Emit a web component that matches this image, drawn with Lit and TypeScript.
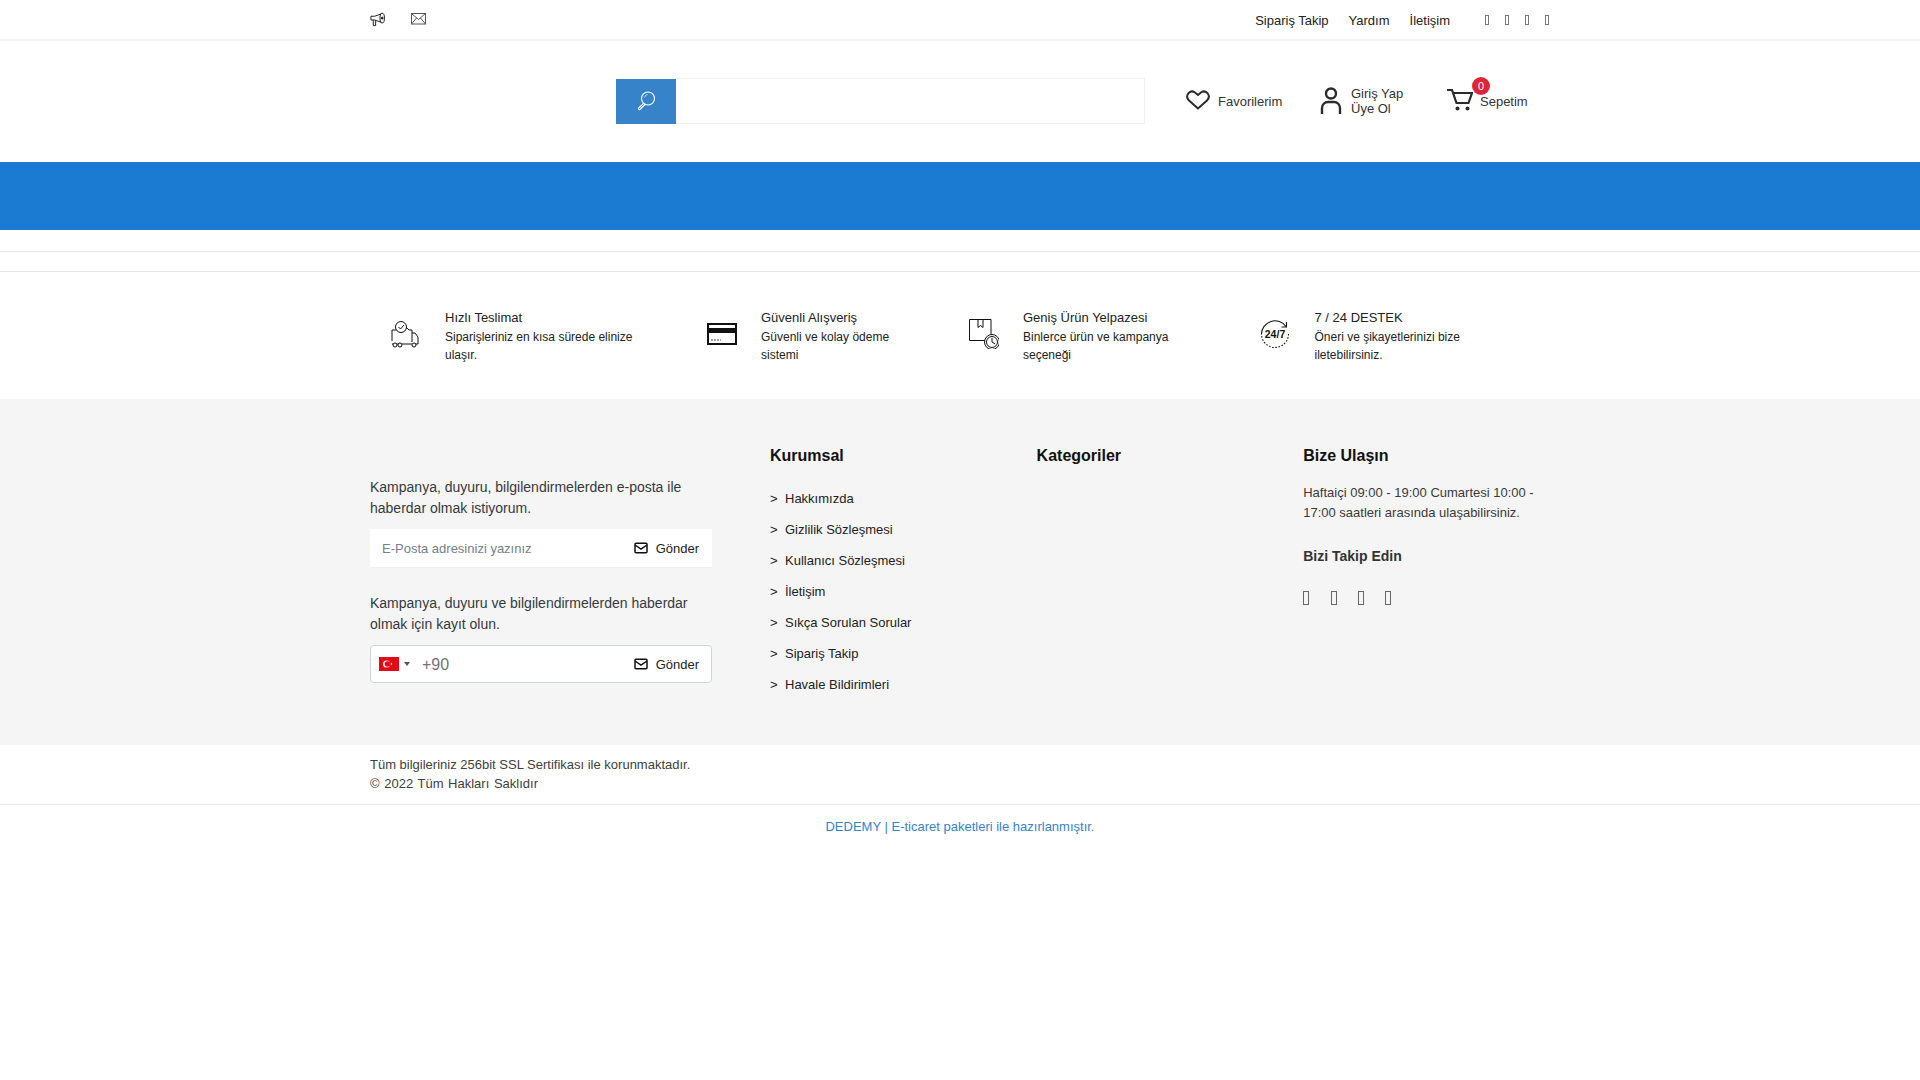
import { LitElement, html, css, svg } from "lit";
import { customElement } from "lit/decorators.js";

const mail = html`<svg class="mailicon" width="14" height="12" viewBox="0 0 14 12" fill="none" stroke="#111" stroke-width="1.5"><rect x="1" y="1.2" width="12" height="9.6" rx="1"/><path d="M1 3l6 4 6-4"/></svg>`;

const tofu = (cls: string) => html`<span class=${cls}></span>`;

const features = [
  { w: 316, pad: 20, gap: 25, title: "Hızlı Teslimat", text: "Siparişleriniz en kısa sürede elinize ulaşır.", textW: 200,
    icon: svg`<g fill="none" stroke="#111" stroke-width="1"><path d="M2 22V11h4l3-3h7l3 3h3v12"/><circle cx="11" cy="8" r="5.500" fill="#fff"/><path d="M8.500 8l2 2L14 6"/><path d="M22 14h3l3 4v7h-3M2 25h20"/><circle cx="5" cy="26" r="2" fill="#fff"/><circle cx="10" cy="26" r="2" fill="#fff"/><circle cx="24" cy="26" r="2" fill="#fff"/></g>` },
  { w: 262, pad: 21, gap: 24, title: "Güvenli Alışveriş", text: "Güvenli ve kolay ödeme sistemi", textW: 150,
    icon: svg`<rect x="1" y="5" width="28" height="20" fill="#fff" stroke="#111" stroke-width="2"/><rect x="1" y="9" width="28" height="5" fill="#111"/><path d="M4 21h10" stroke="#888" stroke-width="1.4" stroke-dasharray="2 1"/>` },
  { w: 292, pad: 21, gap: 24, title: "Geniş Ürün Yelpazesi", text: "Binlerce ürün ve kampanya seçeneği", textW: 170,
    icon: svg`<g fill="none" stroke="#111" stroke-width="1"><path d="M22 17V0.500H0.500V21.500H17"/><path d="M9 0.500v8l2.500-2 2.500 2v-8"/><circle cx="23" cy="23" r="7.500" fill="#fff"/><circle cx="23" cy="23" r="5.500"/><path d="M23 19v4l3 2"/></g>` },
  { w: 300, pad: 20, gap: 24.5, title: "7 / 24 DESTEK", text: "Öneri ve şikayetlerinizi bize iletebilirsiniz.", textW: 170,
    icon: svg`<g fill="none" stroke="#111" stroke-width="1.100"><path d="M1.500 15A13.500 13.500 0 0 1 26 7.500"/><path d="M26.500 3V8H21.500"/><path d="M28.500 15A13.500 13.500 0 0 1 1.500 15" stroke-dasharray="1.600 1.600"/></g><text x="15" y="18.800" text-anchor="middle" font-family="Liberation Sans, sans-serif" font-size="10.500" font-weight="700" fill="#111">24/7</text>` },
];

const links = ["Hakkımızda", "Gizlilik Sözleşmesi", "Kullanıcı Sözleşmesi", "İletişim", "Sıkça Sorulan Sorular", "Sipariş Takip", "Havale Bildirimleri"];

@customElement("app-root")
export class AppRoot extends LitElement {
  static styles = css`
    :host { display: block; font-family: "Liberation Sans", Arial, sans-serif; color: #212529; font-size: 13px; background: #fff; min-height: 1080px; }
    * { box-sizing: border-box; }
    .wrap { width: 1200px; margin: 0 auto; }
    .topbar { height: 41px; border-bottom: 2px solid #f2f2f2; }
    .topbar .wrap { height: 39px; display: flex; align-items: center; justify-content: space-between; padding-left: 10px; padding-right: 10px; }
    .topl { display: flex; align-items: center; gap: 26px; margin-top: -1px; }
    .topr { display: flex; align-items: center; font-size: 13px; color: #222; height: 39px; padding-top: 2px; }
    .topr a { margin-right: 20px; }
    .topr a:nth-child(3) { margin-right: 35px; }
    .tofus { display: flex; gap: 16px; margin-right: 1px; margin-top: -1px; }
    .tf { display: block; width: 4px; height: 10px; border: 1px solid #777; }
    .tfl { display: block; width: 6px; height: 14px; border: 1px solid #666; }
    .head { height: 121px; }
    .head .wrap { height: 121px; display: flex; align-items: center; }
    .search { display: flex; width: 529px; height: 46px; margin-left: 256px; }
    .sbtn { width: 60px; height: 45px; background: #3783c9; display: flex; align-items: center; justify-content: center; }
    .sinput { flex: 1; border: 1px solid #f0f0f0; border-left: none; height: 46px; margin-top: -1px; }
    .acts { display: flex; align-items: center; color: #333; font-size: 13px; }
    .fav { display: flex; align-items: center; gap: 8px; margin-left: 41px; width: 134px; }
    .fav svg { margin-bottom: 4px; }
    .acc { display: flex; align-items: center; gap: 9px; width: 127px; line-height: 15px; }
    .acc svg { margin-bottom: 3px; }
    .acc span { margin-top: -2px; }
    .cart { display: flex; align-items: center; gap: 7px; position: relative; }
    .cart svg { margin-bottom: 3px; }
    .badge { position: absolute; left: 25px; top: -12px; width: 18px; height: 18px; border-radius: 50%; background: #dc2536; color: #fff; font-size: 11px; display: flex; align-items: center; justify-content: center; }
    .blue { height: 68px; background: #1b7ad2; }
    .strip { height: 21px; }
    .thin { height: 21px; border-top: 1px solid #e6e6e6; border-bottom: 1px solid #e6e6e6; }
    .feats { height: 127px; }
    .feats .wrap { display: flex; padding-top: 38px; }
    .feat { display: flex; align-items: flex-start; font-size: 12px; line-height: 18px; color: #222; }
    .feat svg { flex: none; margin-top: 9px; }
    .ft { font-size: 13px; line-height: 18px; margin-bottom: 1px; margin-top: -1px; }
    .foot { background: #f5f5f5; height: 346px; }
    .foot .wrap { display: flex; padding-left: 10px; padding-top: 47px; }
    .c1 { width: 342px; margin-right: 58px; padding-top: 31px; font-size: 14px; line-height: 21px; color: #343a40; }
    .c1 p { margin: 0; }
    .mailform { margin-top: 10px; height: 39px; background: #fff; border-bottom: 1px solid #eee; display: flex; align-items: center; justify-content: space-between; padding: 0 13px 0 12px; color: #75808a; font-size: 13px; margin-bottom: 25px; }
    .send { display: flex; align-items: center; gap: 8px; color: #222; font-size: 13px; }
    .phone { margin-top: 10px; height: 38px; background: #fff; border: 1px solid #ced4da; border-radius: 4px; display: flex; align-items: center; padding: 0 12px 0 8px; color: #6c757d; font-size: 16px; }
    .flag { display: block; margin-right: 5px; flex: none; }
    .caret { width: 0; height: 0; border-left: 3px solid transparent; border-right: 3px solid transparent; border-top: 4px solid #555; margin-right: 12px; }
    .phone .send { margin-left: auto; }
    .col { width: 266.6px; }
    .col.last { width: 240px; }
    h4 { margin: 0; font-size: 16px; line-height: 19px; font-weight: 700; color: #111; }
    ul { list-style: none; margin: 18px 0 0; padding: 0; font-size: 13px; color: #222; }
    li { height: 31px; line-height: 31px; display: flex; }
    li span { width: 15px; }
    .hours { margin: 18px 0 0; font-size: 13px; line-height: 19.500px; color: #3a3a3a; }
    .follow { margin-top: 26px; font-size: 14px; line-height: 17px; font-weight: 700; color: #333; }
    .soc { display: flex; gap: 21.330px; margin-top: 26px; }
    .legal { height: 60px; border-bottom: 1px solid #eaeaea; font-size: 13px; line-height: 19px; color: #404040; }
    .legal .wrap { padding: 10px 10px 0; }
    .copy { word-spacing: 1px; }
    .credit { text-align: center; color: #3783c9; font-size: 13px; padding-top: 14px; }
  `;

  render() {
    const flag = html`<svg class="flag" width="20" height="14" viewBox="0 0 20 14"><rect width="20" height="14" fill="#e30a17"/><circle cx="7.500" cy="7" r="3.500" fill="#fff"/><circle cx="8.400" cy="7" r="2.800" fill="#e30a17"/><polygon points="11,7 13.400,6.200 12,8.200 12,5.800 13.400,7.800" fill="#fff"/></svg>`;
    return html`
      <div class="topbar"><div class="wrap">
        <div class="topl">
          <svg width="15" height="15" viewBox="0 0 16 15" fill="none" stroke="#111" stroke-width="1"><ellipse cx="13" cy="6" rx="2.400" ry="5.200"/><path d="M12 1.500L5 4H1v4h4l7 2.500"/><path d="M3.500 8v6h2.500V8.500"/><circle cx="13" cy="6" r="1" fill="#111"/></svg>
          <svg width="15" height="12" viewBox="0 0 15 12" fill="none" stroke="#555" stroke-width="1"><rect x=".5" y=".5" width="14" height="10.500"/><path d="M.5 .5l7 6 7-6M.5 11l5-6M14.500 11l-5-6"/></svg>
        </div>
        <div class="topr">
          <a>Sipariş Takip</a><a>Yardım</a><a>İletişim</a>
          <div class="tofus">${[0, 1, 2, 3].map(() => tofu("tf"))}</div>
        </div>
      </div></div>
      <div class="head"><div class="wrap">
        <div class="search">
          <div class="sbtn"><svg width="20" height="20" viewBox="0 0 20 20" fill="none" stroke="#fff" stroke-width="1.100"><circle cx="12" cy="7.500" r="6.500"/><path d="M8 12l-5.500 5.200a1 1 0 0 0 1.400 1.300L9 13.500"/><path d="M8.500 6.500a4 4 0 0 1 3-3" stroke-width=".7"/></svg></div>
          <div class="sinput"></div>
        </div>
        <div class="acts">
          <div class="fav">
            <svg width="24" height="20" viewBox="0 0 24 20" fill="none" stroke="#2b2b2b" stroke-width="2"><path d="M12 18.500L3 10.500C-1.500 6 3.500-1 9 2.500L12 5l3-2.500C20.500-1 25.500 6 21 10.500Z"/></svg>
            <span>Favorilerim</span>
          </div>
          <div class="acc">
            <svg width="22" height="27" viewBox="0 0 22 27" fill="none" stroke="#2b2b2b" stroke-width="2.400"><circle cx="11" cy="6.500" r="5"/><path d="M2 27v-6a6 6 0 0 1 6-6h6a6 6 0 0 1 6 6v6"/></svg>
            <span>Giriş Yap<br />Üye Ol</span>
          </div>
          <div class="cart">
            <svg width="26" height="22" viewBox="0 0 26 22" fill="none" stroke="#2b2b2b" stroke-width="2.200"><path d="M0 1h5l4.500 13h12L25 4H6"/><circle cx="10.500" cy="19.500" r="2" fill="#2b2b2b" stroke="none"/><circle cx="20.500" cy="19.500" r="2" fill="#2b2b2b" stroke="none"/></svg>
            <span>Sepetim</span>
            <div class="badge">0</div>
          </div>
        </div>
      </div></div>
      <div class="blue"></div>
      <div class="strip"></div>
      <div class="thin"></div>
      <div class="feats"><div class="wrap">
        ${features.map(
          (f) => html`<div class="feat" style="width:${f.w}px;padding-left:${f.pad + 10}px">
            <svg width="30" height="30" viewBox="0 0 30 30" style="margin-right:${f.gap}px">${f.icon}</svg>
            <div style="width:${f.textW}px"><div class="ft">${f.title}</div>${f.text}</div>
          </div>`
        )}
      </div></div>
      <div class="foot"><div class="wrap">
        <div class="c1">
          <p>Kampanya, duyuru, bilgilendirmelerden e-posta ile haberdar olmak istiyorum.</p>
          <div class="mailform"><span>E-Posta adresinizi yazınız</span><span class="send">${mail}Gönder</span></div>
          <p>Kampanya, duyuru ve bilgilendirmelerden haberdar olmak için kayıt olun.</p>
          <div class="phone">${flag}<span class="caret"></span>+90<span class="send">${mail}Gönder</span></div>
        </div>
        <div class="col"><h4>Kurumsal</h4><ul>${links.map((l) => html`<li><span>&gt;</span>${l}</li>`)}</ul></div>
        <div class="col"><h4>Kategoriler</h4></div>
        <div class="col last">
          <h4>Bize Ulaşın</h4>
          <p class="hours">Haftaiçi 09:00 - 19:00 Cumartesi 10:00 - 17:00 saatleri arasında ulaşabilirsiniz.</p>
          <div class="follow">Bizi Takip Edin</div>
          <div class="soc">${[0, 1, 2, 3].map(() => tofu("tfl"))}</div>
        </div>
      </div></div>
      <div class="legal"><div class="wrap">Tüm bilgileriniz 256bit SSL Sertifikası ile korunmaktadır.<br /><span class="copy">© 2022 Tüm Hakları Saklıdır</span></div></div>
      <div class="credit">DEDEMY | E-ticaret paketleri ile hazırlanmıştır.</div>
    `;
  }
}
